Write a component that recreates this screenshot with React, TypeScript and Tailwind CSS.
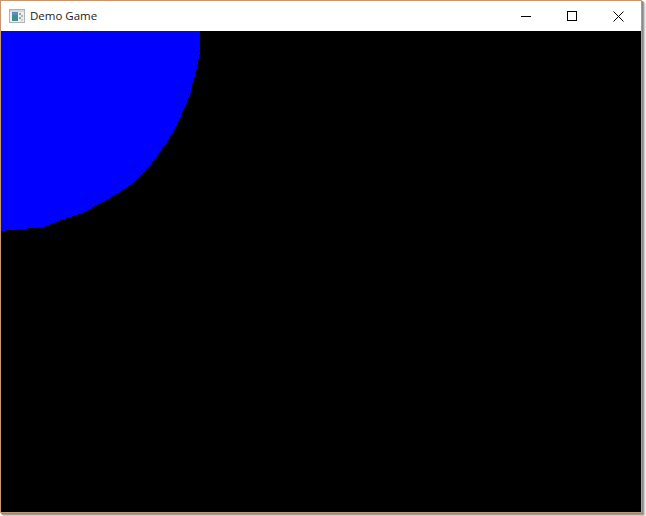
export default function App() {
  return (
    <div className="h-[516px] w-[646px] overflow-hidden bg-white">
      <div className="flex h-[513px] w-[642px] flex-col border border-[#c69872] shadow-[1px_1px_0_#8a8a8a,2px_2px_1px_#a0a0a0,3px_3px_2px_#c4c4c4]">
        <div className="flex h-[30px] shrink-0 items-center bg-white pl-[8px]">
          <GameIcon />
          <span className="ml-[5px] font-['Open_Sans','Liberation_Sans',sans-serif] text-[11.5px] text-[#1a1a1a]">Demo Game</span>
          <div className="ml-auto flex h-full">
            <button type="button" className="flex h-full w-[46px] items-center justify-center">
              <svg width="10" height="10" viewBox="0 0 10 10" shapeRendering="crispEdges">
                <path d="M0 5h10" stroke="#000" strokeWidth="1" />
              </svg>
            </button>
            <button type="button" className="flex h-full w-[46px] items-center justify-center">
              <svg width="10" height="10" viewBox="0 0 10 10" shapeRendering="crispEdges">
                <rect x="0.5" y="0.5" width="9" height="9" fill="none" stroke="#000" />
              </svg>
            </button>
            <button type="button" className="flex h-full w-[46px] items-center justify-center">
              <svg width="11" height="11" viewBox="0 0 11 11">
                <path d="M0.5 0.5l10 10M10.5 0.5l-10 10" stroke="#000" strokeWidth="1" />
              </svg>
            </button>
          </div>
        </div>
        <div className="min-h-0 flex-1 bg-black">
          <svg width="640" height="481" viewBox="0 0 640 481" className="block" shapeRendering="crispEdges">
            {/* coordinates are relative to the client area */}
            <polygon
              fill="#0000ff"
              points="0,0 199,0 199,22 196,37 192,51 189,64 183,78 177,91 171,103 164,114 158,122 151,132 137,148 128,155 117,162 100,172 81,182 60,189 43,196 20,198 0,200"
            />
          </svg>
        </div>
      </div>
    </div>
  )
}

function GameIcon() {
  return (
    <svg width="16" height="14" viewBox="0 0 16 14" shapeRendering="crispEdges">
      <rect x="0.5" y="0.5" width="15" height="13" fill="#eef0f0" stroke="#b0b4b4" />
      <rect x="1" y="1" width="14" height="2" fill="#d5d9da" />
      <rect x="3" y="3" width="6" height="9" fill="#3f8f8c" />
      <rect x="3" y="3" width="6" height="3" fill="#5b8fb5" />
      <rect x="10" y="4" width="2" height="2" fill="#8fa9b0" />
      <rect x="12" y="6" width="2" height="2" fill="#a7b7bb" />
      <rect x="10" y="8" width="2" height="2" fill="#8fa9b0" />
      <rect x="12" y="10" width="2" height="2" fill="#c4cdcf" />
    </svg>
  )
}
